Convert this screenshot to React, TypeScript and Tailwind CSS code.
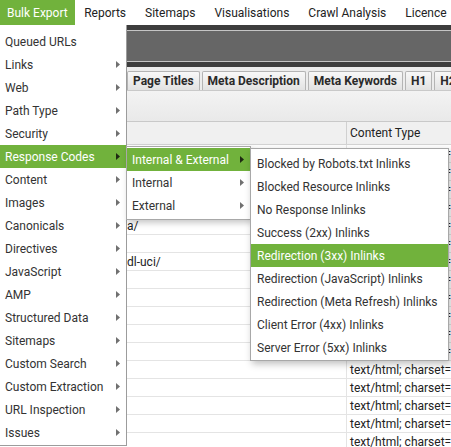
import type { ReactNode } from 'react';

const topMenu = ['Bulk Export', 'Reports', 'Sitemaps', 'Visualisations', 'Crawl Analysis', 'Licence'];

const leftItems = [
    'Queued URLs', 'Links', 'Web', 'Path Type', 'Security', 'Response Codes', 'Content', 'Images',
    'Canonicals', 'Directives', 'JavaScript', 'AMP', 'Structured Data', 'Sitemaps', 'Custom Search',
    'Custom Extraction', 'URL Inspection', 'Issues',
];

const scopeItems = ['Internal & External', 'Internal', 'External'];

const inlinkItems = [
    'Blocked by Robots.txt Inlinks', 'Blocked Resource Inlinks', 'No Response Inlinks',
    'Success (2xx) Inlinks', 'Redirection (3xx) Inlinks', 'Redirection (JavaScript) Inlinks',
    'Redirection (Meta Refresh) Inlinks', 'Client Error (4xx) Inlinks', 'Server Error (5xx) Inlinks',
];

const tabs = ['Page Titles', 'Meta Description', 'Meta Keywords', 'H1', 'H2'];

// tail of the address that peeks out from under the menu
const addressTails: Record<number, string> = { 4: 'a/', 6: 'dl-uci/' };

function Arrow({ dark }: { dark?: boolean }) {
    return (
        <svg width="4" height="7" viewBox="0 0 4 7" className="shrink-0">
            <polygon points="0,0 4,3.5 0,7" fill={dark ? '#1f2a12' : '#707070'} />
        </svg>
    );
}

function MenuRow({ label, active, arrow, pl }: { label: string; active?: boolean; arrow?: boolean; pl: string }) {
    return (
        <div
            className={`flex h-[23px] items-center justify-between pr-[6px] whitespace-nowrap ${pl} ${
                active ? 'bg-[#71b23c] text-white' : 'text-[#333]'
            }`}
        >
            <span>{label}</span>
            {arrow && <Arrow dark={active} />}
        </div>
    );
}

function Tab({ children }: { children: ReactNode }) {
    return (
        <div className="flex h-[19px] items-center rounded-t-[2px] border border-b-0 border-[#b4b4b4] bg-gradient-to-b from-[#f8f8f8] to-[#e2e2e2] px-[5px] text-[12px] font-bold whitespace-nowrap text-[#2a2a2a]">
            {children}
        </div>
    );
}

export default function App() {
    const rows = Array.from({ length: 17 }, (_, i) => i);

    return (
        <div className="relative h-[447px] w-[451px] overflow-hidden bg-white font-['Roboto',sans-serif] text-[12px]">
            {/* top menubar */}
            <div className="flex h-[25px] items-stretch text-[#222]">
                {topMenu.map((m, i) => (
                    <div
                        key={m}
                        className={`flex shrink-0 items-center whitespace-nowrap ${
                            i === 0 ? 'bg-[#71b23c] px-[7px] text-white' : 'px-[9.5px]'
                        }`}
                    >
                        {m}
                    </div>
                ))}
            </div>

            {/* toolbar bands */}
            <div className="h-[5px] bg-[#3d3d3d]" />
            <div className="h-px bg-[#c4c4c4]" />
            <div className="h-[30px] bg-[#666666]" />
            <div className="h-px bg-[#c4c4c4]" />
            <div className="h-[5px] bg-[#3d3d3d]" />

            {/* tab strip */}
            <div className="flex h-[23px] items-end gap-[2px] bg-[#ececec] pl-[127px]">
                {tabs.map((t) => (
                    <Tab key={t}>{t}</Tab>
                ))}
            </div>

            {/* filter area */}
            <div className="h-[32px] border-t border-b border-[#c9c9c9] bg-gradient-to-b from-[#f3f3f3] to-[#e9e9e9]" />

            {/* table header */}
            <div className="flex h-[23px] border-b border-[#d4d4d4] bg-[#f0f0f0] text-[#222]">
                <div className="w-[347px] shrink-0 border-r border-[#d0d0d0]" />
                <div className="flex items-center pl-[3px] whitespace-nowrap">Content Type</div>
            </div>

            {/* table rows */}
            {rows.map((i) => (
                <div key={i} className="flex h-[18px] border-b border-[#e4e4e4] text-[#222]">
                    <div className="flex w-[347px] shrink-0 items-center border-r border-[#e4e4e4] pl-[127px] whitespace-nowrap">
                        {addressTails[i] ?? ''}
                    </div>
                    <div className="flex items-center pl-[3px] whitespace-nowrap">text/html; charset=UTF-8</div>
                </div>
            ))}

            {/* Bulk Export dropdown */}
            <div className="absolute top-[25px] left-0 w-[127px] border-r border-b border-[#9c9c9c] bg-white pt-[5px] pb-[1px]">
                {leftItems.map((l, i) => (
                    <MenuRow key={l} label={l} active={i === 5} arrow={i > 0} pl="pl-[5px]" />
                ))}
            </div>

            {/* Response Codes submenu */}
            <div className="absolute top-[146px] left-[126px] w-[125px] border border-[#a8a8a8] bg-white pt-px pb-[2px] shadow-[2px_3px_6px_rgba(0,0,0,0.22)]">
                {scopeItems.map((s, i) => (
                    <MenuRow key={s} label={s} active={i === 0} arrow pl="pl-[5px]" />
                ))}
            </div>

            {/* Internal & External submenu */}
            <div className="absolute top-[148px] left-[250px] w-[199px] border border-[#a8a8a8] bg-white pt-[3px] pb-[1px] shadow-[2px_3px_7px_rgba(0,0,0,0.25)]">
                {inlinkItems.map((s, i) => (
                    <MenuRow key={s} label={s} active={i === 4} pl="pl-[6px]" />
                ))}
            </div>
        </div>
    );
}
